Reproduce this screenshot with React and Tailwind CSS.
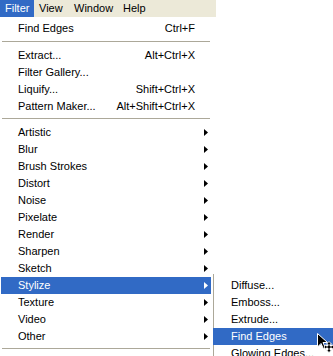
import React from 'react';

const font = { fontFamily: '"Liberation Sans", Arial, sans-serif' };

const Arrow = ({ white }) => (
  <svg width="4" height="7" viewBox="0 0 4 7" className="shrink-0">
    <polygon points="0,0 4,3.5 0,7" fill={white ? '#ffffff' : '#000000'} />
  </svg>
);

const Separator = ({ h = 'h-[9px]', pt = 'pt-[3px]' }) => (
  <div className={`${h} ${pt} px-[1px]`}>
    <div className="h-px bg-[#aca899]" />
  </div>
);

const Item = ({ label, shortcut, sub, active, children }) => (
  <div
    className={`relative flex h-[17px] items-center pl-[17px] pr-[3px] ${
      active ? 'bg-[#316ac5] text-white' : 'text-black'
    }`}
  >
    <span className="flex-1 whitespace-nowrap">{label}</span>
    {shortcut && <span className="mr-[13px] whitespace-nowrap">{shortcut}</span>}
    {sub && <Arrow white={active} />}
    {children}
  </div>
);

const Cursor = () => (
  <svg width="17" height="20" viewBox="0 0 17 20" className="absolute left-[317px] top-[333px]">
    <path d="M0.5 0.5 L0.5 14 L4 10.5 L6.5 16 L8.5 15 L6 9.5 L10.5 9.5 Z" fill="#000" stroke="#fff" strokeWidth="1" />
    <path d="M12 8.5 L14.5 11 L13 11 L13 13 L15 13 L15 11.5 L17 14 L15 16.5 L15 15 L13 15 L13 17 L14.5 17 L12 19.5 L9.5 17 L11 17 L11 15 L9 15 L9 16.5 L7 14 L9 11.5 L9 13 L11 13 L11 11 L9.5 11 Z" fill="#000" stroke="#fff" strokeWidth="0.8" />
  </svg>
);

const filters = ['Artistic', 'Blur', 'Brush Strokes', 'Distort', 'Noise', 'Pixelate', 'Render', 'Sharpen', 'Sketch'];
const after = ['Texture', 'Video', 'Other'];
const stylize = ['Diffuse...', 'Emboss...', 'Extrude...', 'Find Edges', 'Glowing Edges...'];

export default function App() {
  return (
    <div className="relative h-[356px] w-[333px] overflow-hidden bg-white text-[11px] leading-none" style={font}>
      <div className="flex h-[17px] w-[216px] items-center bg-[#ece9d8] text-black">
        <div className="flex h-full w-[34px] items-center bg-[#316ac5] pl-[5px] text-white">Filter</div>
        <div className="pl-[5px] w-[35px]">View</div>
        <div className="pl-[5px] w-[49px]">Window</div>
        <div className="pl-[5px]">Help</div>
      </div>

      <div className="w-[212px] pt-[3px] px-[1px]">
        <Item label="Find Edges" shortcut="Ctrl+F" />
        <Separator h="h-[10px]" pt="pt-[4px]" />
        <Item label="Extract..." shortcut="Alt+Ctrl+X" />
        <Item label="Filter Gallery..." />
        <Item label="Liquify..." shortcut="Shift+Ctrl+X" />
        <Item label="Pattern Maker..." shortcut="Alt+Shift+Ctrl+X" />
        <Separator />
        {filters.map((f) => (
          <Item key={f} label={f} sub />
        ))}
        <Item label="Stylize" sub active>
          <div className="absolute left-[212px] top-[-3px] w-[130px] border-l border-[#aca899] bg-white pt-[3px] text-black">
            {stylize.map((s) => (
              <div
                key={s}
                className={`flex h-[17px] items-center pl-[17px] whitespace-nowrap ${
                  s === 'Find Edges' ? 'bg-[#316ac5] text-white -ml-px pl-[18px]' : ''
                }`}
              >
                {s}
              </div>
            ))}
          </div>
        </Item>
        {after.map((f) => (
          <Item key={f} label={f} sub />
        ))}
        <Separator h="h-[10px]" pt="pt-[3px]" />
      </div>

      <Cursor />
    </div>
  );
}
